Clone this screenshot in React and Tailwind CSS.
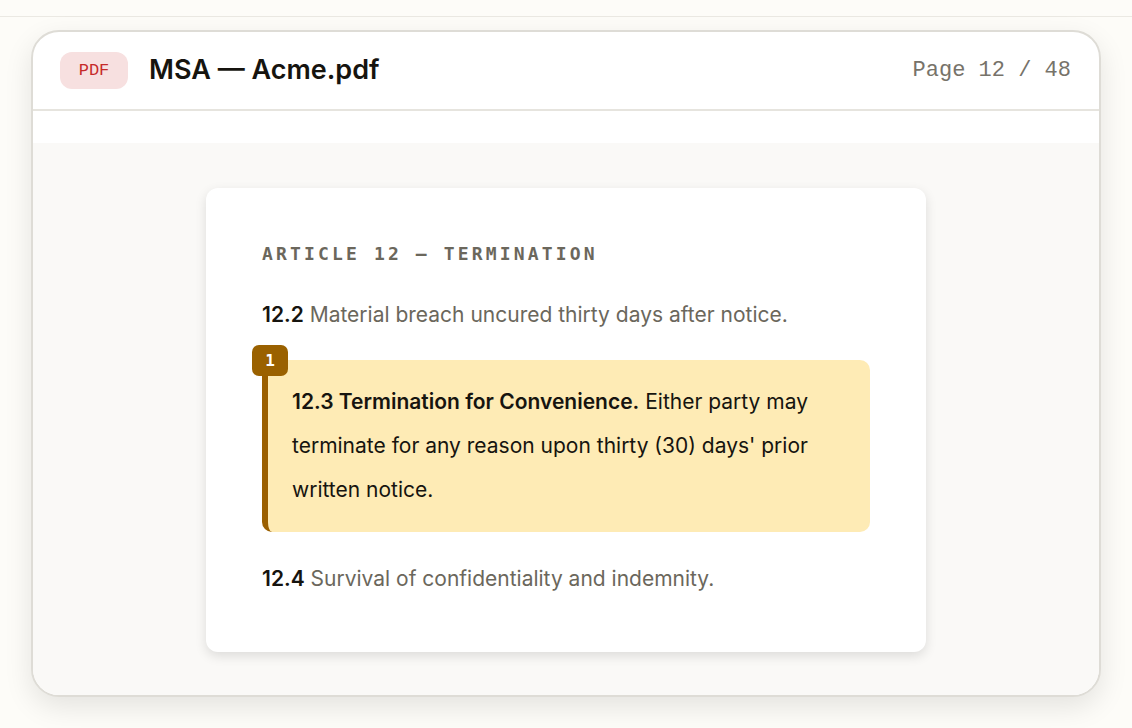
export default function App() {
  return (
    <div className="min-h-[728px] w-full bg-[#fdfcf8] font-['Inter',sans-serif]">
      <div className="h-[17px] border-b border-[#ebe9e3]" />
      <div className="px-[31px] pt-[13px] pb-[32px]">
        <div className="overflow-hidden rounded-[28px] border-2 border-[#dedcd6] bg-white shadow-[0_10px_28px_rgba(0,0,0,0.10)]">
          {/* header */}
          <div className="flex h-[79px] items-center justify-between border-b-2 border-[#e6e4de] pl-[27px] pr-[28px]">
            <div className="flex items-center gap-[21px]">
              <span className="flex h-[37px] w-[68px] items-center justify-center rounded-[12px] bg-[#f7e0e0] font-['Liberation_Mono',monospace] text-[17px] text-[#c62a2a]">
                PDF
              </span>
              <span className="text-[27px] font-semibold text-[#16140f]">
                MSA — Acme.pdf
              </span>
            </div>
            <span className="font-['Liberation_Mono',monospace] text-[22px] text-[#77736a]">
              Page 12 / 48
            </span>
          </div>
          <div className="h-[32px] bg-white" />
          {/* page area */}
          <div className="flex justify-center bg-[#faf9f7] pt-[45px] pb-[43px]">
            <div className="w-[720px] rounded-[12px] bg-white px-[56px] pt-[52px] pb-[58px] shadow-[0_4px_12px_rgba(0,0,0,0.12)]">
              <div className="font-['DejaVu_Sans_Mono',monospace] text-[18px] font-bold tracking-[0.175em] text-[#6b675c]">
                ARTICLE 12 — TERMINATION
              </div>
              <p className="mt-[33px] text-[21px] leading-[30px] text-[#6b675c]">
                <span className="font-semibold text-[#16140f]">12.2</span> Material breach uncured thirty days after notice.
              </p>
              <div className="relative mt-[30px] rounded-[10px] border-l-[6px] border-[#9a5f00] bg-[#feebb5] py-[20px] pl-[24px] pr-[40px]">
                <span className="absolute left-[-16px] top-[-15px] flex h-[31px] w-[36px] items-center justify-center rounded-[7px] bg-[#9a6100] font-['DejaVu_Sans_Mono',monospace] text-[16px] font-bold text-white">
                  1
                </span>
                <p className="text-[21px] leading-[44px] text-[#16140f]">
                  <span className="font-semibold">12.3 Termination for Convenience.</span> Either party may terminate for any reason upon thirty (30) days' prior written notice.
                </p>
              </div>
              <p className="mt-[32px] text-[21px] leading-[30px] text-[#6b675c]">
                <span className="font-semibold text-[#16140f]">12.4</span> Survival of confidentiality and indemnity.
              </p>
            </div>
          </div>
        </div>
      </div>
    </div>
  );
}
